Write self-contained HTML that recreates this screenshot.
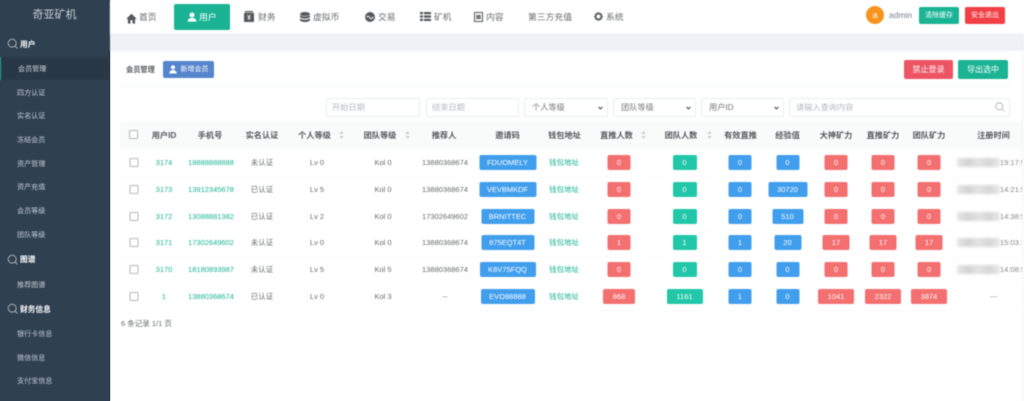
<!DOCTYPE html>
<html lang="zh">
<head>
<meta charset="utf-8">
<title>奇亚矿机</title>
<style>
*{box-sizing:border-box;margin:0;padding:0}
html,body{width:1024px;height:401px;overflow:hidden;background:#fff}
body{font-family:"Liberation Sans","Noto Sans CJK SC",sans-serif;color:#676a6c;position:relative;background:linear-gradient(90deg,#2f4050 110px,#fff 110px)}
#p{position:absolute;left:0;top:0;width:1024px;height:401px;overflow:hidden;filter:blur(.5px)}
.a{position:absolute;white-space:nowrap}
.side{left:0;top:0;width:110px;height:401px;background:#2f4050;border-right:1px solid #283745}
.s{left:17px;font-size:7.1px;line-height:10px;color:#c3cbd2;margin-top:.8px}
.h{left:20px;font-size:7.7px;line-height:10px;color:#fff;font-weight:bold;margin-top:.5px}
.ic{left:7px;width:12px;height:12px}
.n{font-size:8.8px;line-height:12px;top:11px;color:#676a6c}
.i{top:11px}
.btn{color:#fff;text-align:center;border-radius:2px}
.f{top:97.5px;height:19.5px;background:#fff;border:1px solid #e9ecee;border-radius:2px;font-size:8.2px;line-height:17.5px;padding-left:5px;color:#b4b8bc}
.sel{color:#777;padding-left:7px;font-size:8.2px}
.sel svg{position:absolute;right:4px;top:7px}
.th{top:131px;font-size:8.2px;line-height:10px;font-weight:bold;color:#55595c;transform:translateX(-50%)}
.car{top:131px;width:5px;height:8px}
.row{position:absolute;left:0;width:1024px;height:15px}
.row>*{position:absolute;top:0;height:15px;line-height:15px;font-size:7.5px;white-space:nowrap;transform:translateX(-50%);text-align:center}
.row>.cb{left:133.5px;top:3px;width:9px;height:9px;border:1px solid #b5b5b5;border-radius:1.5px;background:#fff}
.gt{color:#1ab394}
.c2{left:164px}.c3{left:211px}.c4{left:262px}.c5{left:317px}.c6{left:383px}.c7{left:445px}.c8{left:507.5px}.c9{left:564px}
.c10{left:619px}.c11{left:684.5px}.c12{left:740px}.c13{left:787.5px}.c14{left:836px}.c15{left:883px}.c16{left:929px}
.b,.r,.g{color:#fff;border-radius:2px}
.b{background:#409eed}.r{background:#f46f70}.g{background:#22c7a9}
.w23{width:23px}.w24{width:24px}.w27{width:27px}.w31{width:31px}.w32{width:32px}.w36{width:36px}.w39{width:39px}
.w53{width:53px}.w54{width:54px}.w56{width:56px}.w57{width:57px}
.dt{left:957px;width:43px;height:9px;background:linear-gradient(90deg,#e6e6e6,#d4d4d4 25%,#e2e2e2 50%,#d6d6d6 75%,#e9e9e9);filter:blur(1.2px)}
.tm{left:1000px;width:22px;overflow:hidden;font-size:7.5px;line-height:15px;color:#888}
.ln{left:120px;width:902px;height:1px;background:#fafafa}
</style>
</head>
<body>
<div id="p">
<div class="a side"></div>
<div class="a" style="left:0;top:8px;width:109px;text-align:center;font-size:11px;line-height:14px;color:#c9d1d8">奇亚矿机</div>

<svg class="a ic" style="top:38px" viewBox="0 0 12 12"><circle cx="5.2" cy="5.2" r="4" fill="none" stroke="#c5ccd3" stroke-width=".8"/><path d="M8.2 8.2L10.5 10.5" stroke="#c5ccd3" stroke-width=".8"/></svg>
<div class="a h" style="top:39px">用户</div>
<div class="a" style="left:0;top:57px;width:109px;height:23px;background:#293846;border-left:1px solid #1ab394"></div>
<div class="a s" style="left:18px;top:63px;color:#ccd4db">会员管理</div>
<div class="a s" style="top:87px">四方认证</div>
<div class="a s" style="top:110.5px">实名认证</div>
<div class="a s" style="top:134px">冻结会员</div>
<div class="a s" style="top:158px">资产管理</div>
<div class="a s" style="top:181.5px">资产充值</div>
<div class="a s" style="top:205px">会员等级</div>
<div class="a s" style="top:229px">团队等级</div>
<svg class="a ic" style="top:254px" viewBox="0 0 12 12"><circle cx="5.2" cy="5.2" r="4" fill="none" stroke="#c5ccd3" stroke-width=".8"/><path d="M8.2 8.2L10.5 10.5" stroke="#c5ccd3" stroke-width=".8"/></svg>
<div class="a h" style="top:254.5px">图谱</div>
<div class="a s" style="top:279px">推荐图谱</div>
<svg class="a ic" style="top:303px" viewBox="0 0 12 12"><circle cx="5.2" cy="5.2" r="4" fill="none" stroke="#c5ccd3" stroke-width=".8"/><path d="M8.2 8.2L10.5 10.5" stroke="#c5ccd3" stroke-width=".8"/></svg>
<div class="a h" style="top:304px">财务信息</div>
<div class="a s" style="top:328px">银行卡信息</div>
<div class="a s" style="top:352px">微信信息</div>
<div class="a s" style="top:375px">支付宝信息</div>

<div class="a" style="left:110px;top:34px;width:914px;height:17px;background:#eff1f6"></div>
<div class="a" style="left:110px;top:0;width:914px;height:34px;background:#fff;box-shadow:0 1px 1px #e8e9ed"></div>

<svg class="a i" style="left:126px;top:13px" width="11" height="11" viewBox="0 0 11 11"><path d="M5.5.8L.4 5.6l.6.7.9-.8V10.6h2.6V7.2h2V10.6h2.6V5.5l.9.8.6-.7z" fill="#55595c"/></svg>
<div class="a n" style="left:139px">首页</div>
<div class="a" style="left:174px;top:4px;width:56px;height:26px;background:#1ab394;border-radius:2px"></div>
<svg class="a i" style="left:187px;top:12px" width="10" height="10" viewBox="0 0 10 10"><circle cx="5" cy="3" r="2.5" fill="#fff"/><path d="M.5 9.6C.7 7 2.5 6 5 6s4.3 1 4.5 3.6z" fill="#fff"/></svg>
<div class="a n" style="left:199px;color:#fff">用户</div>
<svg class="a i" style="left:244px;top:11px" width="10" height="11" viewBox="0 0 10 11"><rect x="0" y="1.8" width="10" height="9.2" rx=".6" fill="#55595c"/><rect x="1" y="0" width="8" height="1.2" fill="#55595c"/><path d="M3.6 4l1.4 1.8L6.4 4M3.5 6.3h3M3.5 7.8h3M5 5.8v3" stroke="#fff" stroke-width=".7" fill="none"/></svg>
<div class="a n" style="left:258px">财务</div>
<svg class="a i" style="left:300px;top:12px" width="10" height="10" viewBox="0 0 10 10"><ellipse cx="5" cy="2" rx="5" ry="2" fill="#55595c"/><path d="M0 3v1.6c0 1.1 2.2 2 5 2s5-.9 5-2V3c-.9 1-2.8 1.5-5 1.5S.9 4 0 3z" fill="#55595c"/><path d="M0 6.2V8c0 1.1 2.2 2 5 2s5-.9 5-2V6.2c-.9 1-2.8 1.5-5 1.5S.9 7.2 0 6.2z" fill="#55595c"/></svg>
<div class="a n" style="left:313px">虚拟币</div>
<svg class="a i" style="left:365px;top:12px" width="10" height="10" viewBox="0 0 10 10"><circle cx="5" cy="5" r="5" fill="#55595c"/><path d="M1.5 5.4c1-1.8 2-1.8 3 0s2 1.8 4-.6" fill="none" stroke="#fff" stroke-width=".9"/></svg>
<div class="a n" style="left:378px">交易</div>
<svg class="a i" style="left:420px;top:12px" width="11" height="9" viewBox="0 0 11 9" fill="#55595c"><rect width="3" height="2.2"/><rect x="4" width="7" height="2.2"/><rect y="3.4" width="3" height="2.2"/><rect x="4" y="3.4" width="7" height="2.2"/><rect y="6.8" width="3" height="2.2"/><rect x="4" y="6.8" width="7" height="2.2"/></svg>
<div class="a n" style="left:434px">矿机</div>
<svg class="a i" style="left:474px;top:12px" width="9" height="10" viewBox="0 0 9 10"><rect x=".5" y=".5" width="8" height="9" fill="none" stroke="#55595c"/><rect x="2.2" y="2.8" width="4.6" height="4.4" fill="#77797c"/></svg>
<div class="a n" style="left:486px">内容</div>
<div class="a n" style="left:528px">第三方充值</div>
<svg class="a i" style="left:594px;top:12px" width="9" height="9" viewBox="0 0 9 9"><circle cx="4.5" cy="4.5" r="2.9" fill="none" stroke="#55595c" stroke-width="1.8"/><path d="M4.5 0v2M4.5 7v2M0 4.5h2M7 4.5h2M1.3 1.3l1.4 1.4M6.3 6.3l1.4 1.4M1.3 7.7l1.4-1.4M6.3 2.7l1.4-1.4" stroke="#55595c" stroke-width="1.2"/></svg>
<div class="a n" style="left:606px">系统</div>

<div class="a" style="left:866px;top:6px;width:18px;height:18px;border-radius:50%;background:#f7931e;color:#fff;font-size:9px;line-height:18px;text-align:center">a</div>
<div class="a" style="left:889px;top:9px;font-size:8.5px;line-height:12px;color:#74808e">admin</div>
<div class="a btn" style="left:919px;top:6.5px;width:40px;height:17px;background:#1ab394;font-size:7px;line-height:17px">清除缓存</div>
<div class="a btn" style="left:965px;top:6.5px;width:40px;height:17px;background:#f23f45;font-size:7px;line-height:17px">安全退出</div>

<div class="a" style="left:126px;top:65px;font-size:7.2px;line-height:10px;font-weight:bold;color:#55595c">会员管理</div>
<div class="a btn" style="left:163px;top:61px;width:51px;height:17px;background:#5585cc;font-size:7px;line-height:17px;padding-left:12px">新增会员</div>
<svg class="a" style="left:169px;top:64.5px" width="8" height="9" viewBox="0 0 8 9"><circle cx="4" cy="2.3" r="2.1" fill="#fff"/><path d="M.3 8.5C.4 6 2 5 4 5s3.6 1 3.7 3.5z" fill="#fff"/></svg>
<div class="a btn" style="left:904px;top:60px;width:49px;height:19px;background:#ed5565;font-size:8px;line-height:19px">禁止登录</div>
<div class="a btn" style="left:958px;top:60px;width:50px;height:19px;background:#1ab394;font-size:8px;line-height:19px">导出选中</div>
<div class="a" style="left:120px;top:86px;width:890px;height:1px;background:#f4f5f6"></div>

<div class="a f" style="left:326px;width:94px">开始日期</div>
<div class="a f" style="left:426px;width:93px">结束日期</div>
<div class="a f sel" style="left:524px;width:84px">个人等级<svg width="5" height="4" viewBox="0 0 5 4"><path d="M.5 .8L2.5 3 4.5 .8" fill="none" stroke="#444" stroke-width="1"/></svg></div>
<div class="a f sel" style="left:613px;width:83px">团队等级<svg width="5" height="4" viewBox="0 0 5 4"><path d="M.5 .8L2.5 3 4.5 .8" fill="none" stroke="#444" stroke-width="1"/></svg></div>
<div class="a f sel" style="left:701px;width:83px">用户ID<svg width="5" height="4" viewBox="0 0 5 4"><path d="M.5 .8L2.5 3 4.5 .8" fill="none" stroke="#444" stroke-width="1"/></svg></div>
<div class="a f" style="left:789px;width:221px;padding-left:6px">请输入查询内容</div>
<svg class="a" style="left:995px;top:102px" width="10" height="10" viewBox="0 0 10 10"><circle cx="4.3" cy="4.3" r="3.5" fill="none" stroke="#aab" stroke-width=".8"/><path d="M7 7L9.5 9.5" stroke="#aab" stroke-width=".8"/></svg>

<div class="a" style="left:120px;top:122px;width:902px;height:27px;background:#f9fafa"></div>
<div class="a" style="left:129px;top:130px;width:9px;height:9px;border:1px solid #b5b5b5;border-radius:1.5px;background:#fff"></div>
<div class="a th" style="left:164px">用户ID</div>
<div class="a th" style="left:210px">手机号</div>
<div class="a th" style="left:262px">实名认证</div>
<div class="a th" style="left:314.5px">个人等级</div>
<div class="a th" style="left:380px">团队等级</div>
<div class="a th" style="left:444px">推荐人</div>
<div class="a th" style="left:507.5px">邀请码</div>
<div class="a th" style="left:564.5px">钱包地址</div>
<div class="a th" style="left:616.5px">直推人数</div>
<div class="a th" style="left:681px">团队人数</div>
<div class="a th" style="left:740.5px">有效直推</div>
<div class="a th" style="left:787.5px">经验值</div>
<div class="a th" style="left:836px">大神矿力</div>
<div class="a th" style="left:883px">直推矿力</div>
<div class="a th" style="left:929px">团队矿力</div>
<div class="a th" style="left:993.5px">注册时间</div>
<svg class="a car" style="left:339px" viewBox="0 0 5 8"><path d="M2.5 0L5 3H0zM2.5 8L0 5h5z" fill="#cfd2d4"/></svg>
<svg class="a car" style="left:405px" viewBox="0 0 5 8"><path d="M2.5 0L5 3H0zM2.5 8L0 5h5z" fill="#cfd2d4"/></svg>
<svg class="a car" style="left:641px" viewBox="0 0 5 8"><path d="M2.5 0L5 3H0zM2.5 8L0 5h5z" fill="#cfd2d4"/></svg>
<svg class="a car" style="left:707px" viewBox="0 0 5 8"><path d="M2.5 0L5 3H0zM2.5 8L0 5h5z" fill="#cfd2d4"/></svg>

<div class="a ln" style="top:176px"></div>
<div class="a ln" style="top:203px"></div>
<div class="a ln" style="top:229px"></div>
<div class="a ln" style="top:256px"></div>
<div class="a ln" style="top:283px"></div>
<div class="a ln" style="top:310px"></div>

<div class="row" style="top:155px"><i class="cb"></i><span class="c2 gt">3174</span><span class="c3 gt">18888888888</span><span class="c4">未认证</span><span class="c5">Lv 0</span><span class="c6">Kol 0</span><span class="c7">13880368674</span><span class="c8 b w57">FDUOMELY</span><span class="c9 gt">钱包地址</span><span class="c10 r w23">0</span><span class="c11 g w24">0</span><span class="c12 b w23">0</span><span class="c13 b w23">0</span><span class="c14 r w23">0</span><span class="c15 r w23">0</span><span class="c16 r w23">0</span></div>
<div class="row" style="top:182px"><i class="cb"></i><span class="c2 gt">3173</span><span class="c3 gt">13912345678</span><span class="c4">已认证</span><span class="c5">Lv 5</span><span class="c6">Kol 0</span><span class="c7">13880368674</span><span class="c8 b w57">VEVBMKDF</span><span class="c9 gt">钱包地址</span><span class="c10 r w23">0</span><span class="c11 g w24">0</span><span class="c12 b w23">0</span><span class="c13 b w39">30720</span><span class="c14 r w23">0</span><span class="c15 r w23">0</span><span class="c16 r w23">0</span></div>
<div class="row" style="top:209px"><i class="cb"></i><span class="c2 gt">3172</span><span class="c3 gt">13088881382</span><span class="c4">已认证</span><span class="c5">Lv 2</span><span class="c6">Kol 0</span><span class="c7">17302649602</span><span class="c8 b w53">BRNITTEC</span><span class="c9 gt">钱包地址</span><span class="c10 r w23">0</span><span class="c11 g w24">0</span><span class="c12 b w23">0</span><span class="c13 b w31">510</span><span class="c14 r w23">0</span><span class="c15 r w23">0</span><span class="c16 r w23">0</span></div>
<div class="row" style="top:235px"><i class="cb"></i><span class="c2 gt">3171</span><span class="c3 gt">17302649602</span><span class="c4">未认证</span><span class="c5">Lv 0</span><span class="c6">Kol 0</span><span class="c7">13880368674</span><span class="c8 b w53">875EQT4T</span><span class="c9 gt">钱包地址</span><span class="c10 r w23">1</span><span class="c11 g w24">1</span><span class="c12 b w23">1</span><span class="c13 b w27">20</span><span class="c14 r w27">17</span><span class="c15 r w27">17</span><span class="c16 r w27">17</span></div>
<div class="row" style="top:262px"><i class="cb"></i><span class="c2 gt">3170</span><span class="c3 gt">18180893987</span><span class="c4">未认证</span><span class="c5">Lv 5</span><span class="c6">Kol 5</span><span class="c7">13880368674</span><span class="c8 b w56">K6V75FQQ</span><span class="c9 gt">钱包地址</span><span class="c10 r w23">0</span><span class="c11 g w24">0</span><span class="c12 b w23">0</span><span class="c13 b w23">0</span><span class="c14 r w23">0</span><span class="c15 r w23">0</span><span class="c16 r w23">0</span></div>
<div class="row" style="top:289px"><i class="cb"></i><span class="c2 gt">1</span><span class="c3 gt">13880368674</span><span class="c4">已认证</span><span class="c5">Lv 0</span><span class="c6">Kol 3</span><span class="c7">--</span><span class="c8 b w54">EVO88888</span><span class="c9 gt">钱包地址</span><span class="c10 r w32">868</span><span class="c11 g w36">1161</span><span class="c12 b w23">1</span><span class="c13 b w23">0</span><span class="c14 r w36">1041</span><span class="c15 r w36">2322</span><span class="c16 r w36">3874</span></div>

<div class="a dt" style="top:158px"></div><div class="a tm" style="top:155px">19:17:59</div>
<div class="a dt" style="top:185px"></div><div class="a tm" style="top:182px">14:21:59</div>
<div class="a dt" style="top:212px"></div><div class="a tm" style="top:209px">14:38:59</div>
<div class="a dt" style="top:238px"></div><div class="a tm" style="top:235px">15:03:19</div>
<div class="a dt" style="top:265px"></div><div class="a tm" style="top:262px">14:08:59</div>
<div class="a" style="left:983px;top:289px;width:21px;text-align:center;font-size:7.5px;line-height:15px;color:#888">---</div>

<div class="a" style="left:121px;top:317.5px;font-size:7.5px;line-height:11px;color:#676a6c">6 条记录 1/1 页</div>
<div class="a" style="left:1022px;top:51px;width:1px;height:350px;background:#f3f4f5"></div>
</div>
</body>
</html>
